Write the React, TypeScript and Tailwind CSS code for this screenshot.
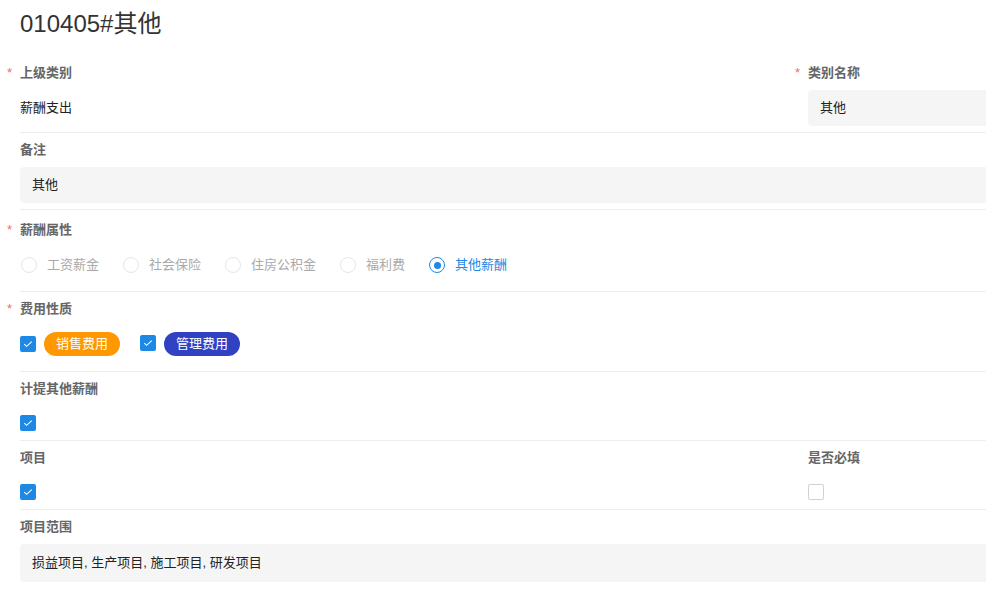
import React from 'react';

const font = { fontFamily: '"Liberation Sans", "Noto Sans CJK SC", sans-serif' };

function Label({ text, required }: { text: string; required?: boolean }) {
  return (
    <div className="relative h-5 leading-5 text-[13px] font-bold text-[#666]">
      {required && <span className="absolute -left-[13px] top-0 text-[#f56c6c] font-normal">*</span>}
      {text}
    </div>
  );
}

function Check({ checked }: { checked: boolean }) {
  if (!checked) {
    return <span className="inline-block w-4 h-4 rounded-[2px] border border-[#d0d0d0] bg-white" />;
  }
  return (
    <span className="inline-flex w-4 h-4 items-center justify-center rounded-[2px] bg-[#1e88e5]">
      <svg viewBox="0 0 16 16" className="w-3 h-3" fill="none" stroke="white" strokeWidth="1.4">
        <path d="M3 8.2l3.2 3L13 4.8" />
      </svg>
    </span>
  );
}

function Radio({ text, selected }: { text: string; selected?: boolean }) {
  return (
    <div className="flex items-center mr-[24px]">
      <span
        className={
          selected
            ? 'flex w-4 h-4 items-center justify-center rounded-full border border-[#1e88e5]'
            : 'w-4 h-4 rounded-full border border-[#e6e6e6]'
        }
      >
        {selected && <span className="w-[7px] h-[7px] rounded-full bg-[#1e88e5]" />}
      </span>
      <span className={selected ? 'ml-[10px] text-[13px] text-[#1e88e5]' : 'ml-[10px] text-[13px] text-[#aaa]'}>
        {text}
      </span>
    </div>
  );
}

const radios = ['工资薪金', '社会保险', '住房公积金', '福利费', '其他薪酬'];

export default function App() {
  return (
    <div className="w-[986px] h-[615px] overflow-hidden bg-white text-[#333]" style={font}>
      <div className="w-[1600px] pl-5">
        <div className="h-[48px] flex items-center text-[24px] text-[#333]">010405#其他</div>

        <div className="grid grid-cols-[788px_788px] border-b border-[#eee] pt-[15px] pb-[6px]">
          <div>
            <Label text="上级类别" required />
            <div className="mt-[7px] h-9 flex items-center text-[13px] text-[#222]">薪酬支出</div>
          </div>
          <div>
            <Label text="类别名称" required />
            <div className="mt-[7px] h-9 flex items-center px-3 rounded bg-[#f5f5f5] text-[13px] text-[#222]">其他</div>
          </div>
        </div>

        <div className="border-b border-[#eee] pt-[7px] pb-[6px]">
          <Label text="备注" />
          <div className="mt-[7px] h-9 flex items-center px-3 rounded bg-[#f5f5f5] text-[13px] text-[#222]">其他</div>
        </div>

        <div className="border-b border-[#eee] pt-[10px] pb-[8px]">
          <Label text="薪酬属性" required />
          <div className="mt-[7px] h-9 flex items-center pl-px">
            {radios.map((r, i) => (
              <Radio key={r} text={r} selected={i === radios.length - 1} />
            ))}
          </div>
        </div>

        <div className="border-b border-[#eee] pt-[7px] pb-[9px]">
          <Label text="费用性质" required />
          <div className="mt-[7px] h-9 flex items-center">
            <Check checked />
            <span className="ml-2 h-6 px-3 flex items-center rounded-full bg-[#ff9800] text-white text-[13px]">销售费用</span>
            <span className="ml-5">
              <Check checked />
            </span>
            <span className="ml-2 h-6 px-3 flex items-center rounded-full bg-[#3042c2] text-white text-[13px]">管理费用</span>
          </div>
        </div>

        <div className="border-b border-[#eee] pt-[7px] pb-px">
          <Label text="计提其他薪酬" />
          <div className="mt-[8px] h-8 flex items-center">
            <Check checked />
          </div>
        </div>

        <div className="grid grid-cols-[788px_788px] border-b border-[#eee] pt-[7px] pb-px">
          <div>
            <Label text="项目" />
            <div className="mt-[8px] h-8 flex items-center">
              <Check checked />
            </div>
          </div>
          <div>
            <Label text="是否必填" />
            <div className="mt-[8px] h-8 flex items-center">
              <Check checked={false} />
            </div>
          </div>
        </div>

        <div className="pt-[7px]">
          <Label text="项目范围" />
          <div className="mt-[7px] h-[38px] flex items-center px-3 rounded bg-[#f5f5f5] text-[13px] text-[#222]">
            损益项目, 生产项目, 施工项目, 研发项目
          </div>
        </div>
      </div>
    </div>
  );
}
